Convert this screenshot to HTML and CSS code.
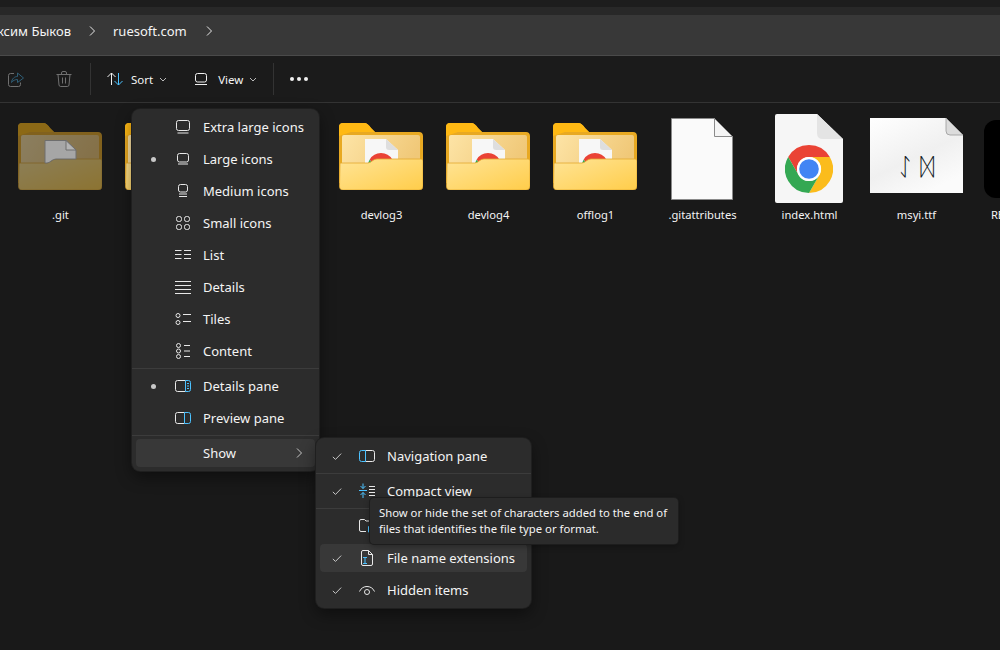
FILE: index.html
```html
<!DOCTYPE html>
<html>

<head>
    <title>ruesoft.com</title>
    <link rel="stylesheet" href="styles.css">
</head>

<body>

    <svg class="defs">
        <defs>
            <linearGradient id="paperGrad" x1="0" y1="0" x2="1" y2="0.3">
                <stop offset="0" stop-color="#fde4a6" />
                <stop offset="1" stop-color="#f0c878" />
            </linearGradient>
            <linearGradient id="frontGrad" x1="0" y1="0" x2="1" y2="1">
                <stop offset="0" stop-color="#ffe496" />
                <stop offset="1" stop-color="#ffcd4a" />
            </linearGradient>
            <linearGradient id="fontGrad" x1="0" y1="0" x2="0.6" y2="1">
                <stop offset="0" stop-color="#ffffff" />
                <stop offset="0.6" stop-color="#f0f0f0" />
                <stop offset="1" stop-color="#fbfbfb" />
            </linearGradient>

            <symbol id="folder-back" viewBox="0 0 84 67">
                <path d="M4 0H25C28 0 30 2 32 5L36 9H80C82.500 9 84 10.500 84 13V60H0V4C0 1.500 1.500 0 4 0Z" fill="#e8a922" />
                <path d="M4 0H25C28 0 30 2 32 5L36 9H12L0 13V4C0 1.500 1.500 0 4 0Z" fill="#ffb914" />
                <rect x="3" y="12" width="78" height="40" rx="2" fill="url(#paperGrad)" />
            </symbol>
            <symbol id="folder-front" viewBox="0 0 84 67">
                <path d="M1 41C1 40.500 1.500 40 2 40H29C32 40 34 36 38 36H82C83 36 84 37 84 38V63C84 65.500 82.500 67 80 67H4C1.500 67 0.500 65.500 0.500 63Z" fill="url(#frontGrad)" stroke="#e3a82e" stroke-width="0.8" />
            </symbol>

            <symbol id="chrome" viewBox="0 0 48 48">
                <path d="M24 0A24 24 0 0 0 3.200 12L13.600 30A12 12 0 0 1 24 12H44.800A24 24 0 0 0 24 0Z" fill="#ea4335" />
                <path d="M44.800 12A24 24 0 0 1 24 48L34.400 30A12 12 0 0 0 24 12Z" fill="#fbbc1c" />
                <path d="M3.200 12A24 24 0 0 0 24 48L34.400 30A12 12 0 0 1 13.600 30Z" fill="#34a853" />
                <circle cx="24" cy="24" r="12" fill="#fff" />
                <circle cx="24" cy="24" r="9.800" fill="#4285f4" />
            </symbol>

            <symbol id="ic-view" viewBox="0 0 16 16">
                <rect x="2.500" y="2.500" width="11" height="8.500" rx="2" />
                <path d="M2 13.500H14" />
            </symbol>
            <symbol id="ic-xl" viewBox="0 0 16 16">
                <rect x="1.500" y="1.500" width="13" height="10" rx="2" />
                <path d="M2.500 14H13.500" />
            </symbol>
            <symbol id="ic-lg" viewBox="0 0 16 16">
                <rect x="2.500" y="2.500" width="11" height="8.500" rx="2" />
                <path d="M3 13H13" />
            </symbol>
            <symbol id="ic-md" viewBox="0 0 16 16">
                <rect x="3.500" y="1.500" width="9" height="7.500" rx="2" />
                <path d="M4 11H12M4 13.500H12" />
            </symbol>
            <symbol id="ic-sm" viewBox="0 0 16 16">
                <rect x="1.500" y="1.500" width="5" height="5" rx="2" />
                <rect x="9.500" y="1.500" width="5" height="5" rx="2" />
                <rect x="1.500" y="9.500" width="5" height="5" rx="2" />
                <rect x="9.500" y="9.500" width="5" height="5" rx="2" />
            </symbol>
            <symbol id="ic-list" viewBox="0 0 16 16">
                <path d="M0 3.500H6.500M0 7.500H6.500M0 11.500H6.500M9 3.500H16M9 7.500H16M9 11.500H16" />
            </symbol>
            <symbol id="ic-details" viewBox="0 0 16 16">
                <path d="M0 2.500H16M0 6.500H16M0 10.500H16M0 14.500H16" />
            </symbol>
            <symbol id="ic-tiles" viewBox="0 0 16 16">
                <circle cx="3" cy="4.500" r="2" />
                <circle cx="3" cy="11.500" r="2" />
                <path d="M8 3.500H16M8 10.500H16" />
            </symbol>
            <symbol id="ic-content" viewBox="0 0 16 16">
                <circle cx="3.500" cy="2.500" r="2" />
                <circle cx="3.500" cy="8" r="2" />
                <circle cx="3.500" cy="13.500" r="2" />
                <path d="M9 2.500H15M9 8H15M9 13.500H15" />
            </symbol>
            <symbol id="ic-detailspane" viewBox="0 0 16 16">
                <path d="M10.500 2.500H2.500Q0.500 2.500 0.500 4.500V11.500Q0.500 13.500 2.500 13.500H10.500" />
                <path class="accent" d="M10.500 2.500H13.500Q15.500 2.500 15.500 4.500V11.500Q15.500 13.500 13.500 13.500H10.500ZM12 5.500H14M12 8H14M12 10.500H14" />
            </symbol>
            <symbol id="ic-previewpane" viewBox="0 0 16 16">
                <path d="M9.500 2.500H2.500Q0.500 2.500 0.500 4.500V11.500Q0.500 13.500 2.500 13.500H9.500" />
                <path class="accent" d="M9.500 2.500H13.500Q15.500 2.500 15.500 4.500V11.500Q15.500 13.500 13.500 13.500H9.500Z" />
            </symbol>
            <symbol id="ic-navpane" viewBox="0 0 16 16">
                <path d="M6.500 2.500H13.500Q15.500 2.500 15.500 4.500V11.500Q15.500 13.500 13.500 13.500H6.500" />
                <path class="accent" d="M6.500 2.500H2.500Q0.500 2.500 0.500 4.500V11.500Q0.500 13.500 2.500 13.500H6.500Z" />
            </symbol>
            <symbol id="ic-compact" viewBox="0 0 16 16">
                <path class="accent" d="M0 7.500H8M4 0.500V5.500M1.500 3L4 5.500L6.500 3M4 15V9.500M1.500 12L4 9.500L6.500 12" />
                <path d="M10 3.500H16M10 6.500H16M10 9.500H16M10 12.500H16" />
            </symbol>
            <symbol id="ic-checkbox" viewBox="0 0 16 16">
                <path d="M13 7V4.500Q13 3 11.500 3H7L5.500 1.500H2Q0.500 1.500 0.500 3V12Q0.500 13.500 2 13.500H7" />
                <rect class="accent-fill" x="9" y="8" width="6" height="6.500" rx="1" />
            </symbol>
            <symbol id="ic-fileext" viewBox="0 0 16 16">
                <path d="M9.500 0.500H4Q2.500 0.500 2.500 2V14Q2.500 15.500 4 15.500H12Q13.500 15.500 13.500 14V4.500L9.500 0.500V4.500H13.500" />
                <path class="accent" d="M4 7.500H8M6 7.500V13.500M4 13.500H8" />
            </symbol>
            <symbol id="ic-eye" viewBox="0 0 16 16">
                <path d="M0.500 9.500C2 6 5 4.500 8 4.500C11 4.500 14 6 15.500 9.500" />
                <circle cx="8" cy="10" r="2.500" />
            </symbol>
        </defs>
    </svg>

    <div class="window">
        <div class="tabstrip"></div>

        <div class="addressbar">
            <div class="crumb-clip"><span>Максим Быков</span></div>
            <svg class="crumb-chev" viewBox="0 0 8 12"><path d="M2 1.500L6.500 6L2 10.500" /></svg>
            <span class="crumb">ruesoft.com</span>
            <svg class="crumb-chev" viewBox="0 0 8 12"><path d="M2 1.500L6.500 6L2 10.500" /></svg>
        </div>

        <div class="toolbar">
            <svg class="tool-icon dim" viewBox="0 0 16 16">
                <path d="M6 2.500H2.500Q0.500 2.500 0.500 4.500V13.500Q0.500 15.500 2.500 15.500H10.500Q12.500 15.500 12.500 13.500V11.500" />
                <path class="accent" d="M3.500 11.500C4 7.500 6.500 5.500 9.500 5.500V2L15.500 7L9.500 11.500V8.500C7 8.500 5 9.500 3.500 11.500Z" />
            </svg>
            <svg class="tool-icon dim trash" viewBox="0 0 16 16">
                <path d="M0.500 3.500H15.500M5.500 3.500V2Q5.500 0.500 7 0.500H9Q10.500 0.500 10.500 2V3.500M2 3.500L3 14Q3.200 15.500 4.700 15.500H11.300Q12.800 15.500 13 14L14 3.500M6.500 6.500V12.500M9.500 6.500V12.500" />
            </svg>
            <div class="tool-sep"></div>
            <svg class="tool-icon sort-icon" viewBox="0 0 16 16">
                <path d="M4.500 14V2M0.500 6L4.500 2L8.500 6" />
                <path class="accent" d="M11.500 2V14M7.500 10L11.500 14L15.500 10" />
            </svg>
            <span class="tool-label">Sort</span>
            <svg class="tool-chev" viewBox="0 0 8 5"><path d="M1 1L4 4L7 1" /></svg>
            <svg class="tool-icon view-icon" viewBox="0 0 16 16"><use href="#ic-view" /></svg>
            <span class="tool-label">View</span>
            <svg class="tool-chev" viewBox="0 0 8 5"><path d="M1 1L4 4L7 1" /></svg>
            <div class="tool-sep second"></div>
            <div class="dots"><i></i><i></i><i></i></div>
        </div>

        <div class="files">
            <div class="file">
                <div class="thumb">
                    <svg class="folder" viewBox="0 0 84 67">
                        <g class="faded">
                            <use href="#folder-back" />
                            <use href="#folder-front" />
                        </g>
                        <path d="M27 17.500H48L58 27V36H38C34 36 32 40 29 40H27Z" fill="#a6a6a6" stroke="#6e6e6e" />
                        <path d="M48 17.500V27H58Z" fill="#b4b4b4" stroke="#6e6e6e" />
                    </svg>
                </div>
                <div class="name">.git</div>
            </div>
            <div class="file">
                <div class="thumb">
                    <svg class="folder" viewBox="0 0 84 67"><use href="#folder-back" /><use href="#folder-front" /></svg>
                </div>
                <div class="name">devlog1</div>
            </div>
            <div class="file">
                <div class="thumb">
                    <svg class="folder" viewBox="0 0 84 67"><use href="#folder-back" /><use href="#folder-front" /></svg>
                </div>
                <div class="name">devlog2</div>
            </div>
            <div class="file">
                <div class="thumb">
                    <svg class="folder" viewBox="0 0 84 67">
                        <use href="#folder-back" />
                        <path d="M26 16H47L59 27V50H26Z" fill="#f7f7f7" />
                        <path d="M47 16L59 27H50Q47 27 47 24Z" fill="#dedede" />
                        <use href="#chrome" x="29" y="30" width="26" height="26" />
                        <use href="#folder-front" />
                    </svg>
                </div>
                <div class="name">devlog3</div>
            </div>
            <div class="file">
                <div class="thumb">
                    <svg class="folder" viewBox="0 0 84 67">
                        <use href="#folder-back" />
                        <path d="M26 16H47L59 27V50H26Z" fill="#f7f7f7" />
                        <path d="M47 16L59 27H50Q47 27 47 24Z" fill="#dedede" />
                        <use href="#chrome" x="29" y="30" width="26" height="26" />
                        <use href="#folder-front" />
                    </svg>
                </div>
                <div class="name">devlog4</div>
            </div>
            <div class="file">
                <div class="thumb">
                    <svg class="folder" viewBox="0 0 84 67">
                        <use href="#folder-back" />
                        <path d="M26 16H47L59 27V50H26Z" fill="#f7f7f7" />
                        <path d="M47 16L59 27H50Q47 27 47 24Z" fill="#dedede" />
                        <use href="#chrome" x="29" y="30" width="26" height="26" />
                        <use href="#folder-front" />
                    </svg>
                </div>
                <div class="name">offlog1</div>
            </div>
            <div class="file">
                <div class="thumb">
                    <svg class="doc-plain" viewBox="0 0 62 82">
                        <path d="M0.500 0.500H43.500L61.500 18.500V81.500H0.500Z" fill="#fafafa" stroke="#8a8a8a" />
                        <path d="M43.500 0.500L61.500 18.500H43.500Z" fill="#f4f4f4" stroke="#8a8a8a" />
                    </svg>
                </div>
                <div class="name">.gitattributes</div>
            </div>
            <div class="file">
                <div class="thumb">
                    <svg class="doc-chrome" viewBox="0 0 68 89">
                        <path d="M2 0H42L68 25V87Q68 89 66 89H2Q0 89 0 87V2Q0 0 2 0Z" fill="#f6f6f6" />
                        <path d="M42 0L68 25H48Q42 25 42 19Z" fill="#e4e4e4" />
                        <use href="#chrome" x="10" y="31" width="48" height="48" />
                    </svg>
                </div>
                <div class="name">index.html</div>
            </div>
            <div class="file">
                <div class="thumb">
                    <svg class="doc-font" viewBox="0 0 93 75">
                        <path d="M0 0H76L93 17V75H0Z" fill="url(#fontGrad)" />
                        <path d="M76 0L93 17H80Q76 17 76 13Z" fill="#dcdcdc" stroke="#999" stroke-width="0.800" />
                        <text class="rune" x="46" y="57" text-anchor="middle">ᛇ ᛞ</text>
                    </svg>
                </div>
                <div class="name">msyi.ttf</div>
            </div>
            <div class="file">
                <div class="thumb">
                    <div class="black-tile"></div>
                </div>
                <div class="name">README.md</div>
            </div>
        </div>
    </div>

    <div class="menu view-menu">
        <div class="row"><span class="mark"></span><svg class="row-icon" viewBox="0 0 16 16"><use href="#ic-xl" /></svg><span>Extra large icons</span></div>
        <div class="row"><span class="mark"><i class="bullet"></i></span><svg class="row-icon" viewBox="0 0 16 16"><use href="#ic-lg" /></svg><span>Large icons</span></div>
        <div class="row"><span class="mark"></span><svg class="row-icon" viewBox="0 0 16 16"><use href="#ic-md" /></svg><span>Medium icons</span></div>
        <div class="row"><span class="mark"></span><svg class="row-icon" viewBox="0 0 16 16"><use href="#ic-sm" /></svg><span>Small icons</span></div>
        <div class="row"><span class="mark"></span><svg class="row-icon" viewBox="0 0 16 16"><use href="#ic-list" /></svg><span>List</span></div>
        <div class="row"><span class="mark"></span><svg class="row-icon" viewBox="0 0 16 16"><use href="#ic-details" /></svg><span>Details</span></div>
        <div class="row"><span class="mark"></span><svg class="row-icon" viewBox="0 0 16 16"><use href="#ic-tiles" /></svg><span>Tiles</span></div>
        <div class="row"><span class="mark"></span><svg class="row-icon" viewBox="0 0 16 16"><use href="#ic-content" /></svg><span>Content</span></div>
        <div class="menu-sep"></div>
        <div class="row"><span class="mark"><i class="bullet"></i></span><svg class="row-icon" viewBox="0 0 16 16"><use href="#ic-detailspane" /></svg><span>Details pane</span></div>
        <div class="row"><span class="mark"></span><svg class="row-icon" viewBox="0 0 16 16"><use href="#ic-previewpane" /></svg><span>Preview pane</span></div>
        <div class="menu-sep"></div>
        <div class="row active"><span class="mark"></span><span class="row-icon"></span><span>Show</span>
            <svg class="row-arrow" viewBox="0 0 8 12"><path d="M2 1.500L6.500 6L2 10.500" /></svg>
        </div>
    </div>

    <div class="menu show-menu">
        <div class="row"><span class="mark"><svg class="check" viewBox="0 0 12 10"><path d="M1 5.500L4.200 8.500L11 1.500" /></svg></span><svg class="row-icon" viewBox="0 0 16 16"><use href="#ic-navpane" /></svg><span>Navigation pane</span></div>
        <div class="menu-sep"></div>
        <div class="row"><span class="mark"><svg class="check" viewBox="0 0 12 10"><path d="M1 5.500L4.200 8.500L11 1.500" /></svg></span><svg class="row-icon" viewBox="0 0 16 16"><use href="#ic-compact" /></svg><span>Compact view</span></div>
        <div class="menu-sep"></div>
        <div class="row"><span class="mark"></span><svg class="row-icon" viewBox="0 0 16 16"><use href="#ic-checkbox" /></svg><span>Item check boxes</span></div>
        <div class="row active"><span class="mark"><svg class="check" viewBox="0 0 12 10"><path d="M1 5.500L4.200 8.500L11 1.500" /></svg></span><svg class="row-icon" viewBox="0 0 16 16"><use href="#ic-fileext" /></svg><span>File name extensions</span></div>
        <div class="row"><span class="mark"><svg class="check" viewBox="0 0 12 10"><path d="M1 5.500L4.200 8.500L11 1.500" /></svg></span><svg class="row-icon" viewBox="0 0 16 16"><use href="#ic-eye" /></svg><span>Hidden items</span></div>
    </div>

    <div class="tooltip">Show or hide the set of characters added to the end of<br>files that identifies the file type or format.</div>

</body>

</html>
```

FILE: styles.css
```css
* {
    box-sizing: border-box
}

html,
body {
    margin: 0;
    height: 100%;
    overflow: hidden;
    background-color: #191919;
    color: #f4f4f4;
    font-family: "Noto Sans", sans-serif;
}

.defs {
    display: block;
    width: 0;
    height: 0;
}

svg {
    fill: none;
    stroke: none;
    flex-shrink: 0;
}

.accent {
    stroke: #4cc2ff;
}

.accent-fill {
    fill: #4cc2ff;
    stroke: none;
}

.window {
    display: flex;
    flex-direction: column;
    height: 650px;
}

.tabstrip {
    height: 15px;
    background: linear-gradient(#1d1d1d 7px, #282828 7px);
}

/* address bar */

.addressbar {
    display: flex;
    align-items: center;
    height: 41px;
    padding-bottom: 8px;
    background-color: #383838;
    border-bottom: 1px solid #4a4a4a;
    font-size: 13px;
}

.crumb-clip {
    display: flex;
    justify-content: flex-end;
    width: 71px;
    overflow: hidden;
    white-space: nowrap;
}

.crumb-clip span {
    flex-shrink: 0;
}

.crumb-chev {
    width: 8px;
    height: 12px;
    margin: 0 17px;
    stroke: #e8e8e8;
    stroke-width: 1;
}

.crumb {
    white-space: nowrap;
}

.crumb-chev:last-child {
    margin-left: 18px;
}

/* toolbar */

.toolbar {
    display: flex;
    align-items: center;
    height: 47px;
    padding-left: 8px;
    background-color: #1b1b1b;
    border-bottom: 1px solid #333;
    font-size: 11.5px;
}

.tool-icon {
    width: 16px;
    height: 16px;
    stroke: #f0f0f0;
    stroke-width: 1;
}

.tool-icon.dim {
    opacity: 0.4;
}

.trash {
    margin-left: 32px;
}

.tool-sep {
    width: 1px;
    height: 32px;
    margin-left: 18px;
    background-color: #333;
}

.tool-sep.second {
    margin-left: 16px;
}

.sort-icon {
    margin-left: 16px;
}

.view-icon {
    margin-left: 26px;
}

.tool-label {
    margin-left: 8px;
}

.view-icon + .tool-label {
    margin-left: 9px;
}

.tool-chev {
    width: 8px;
    height: 5px;
    margin-left: 6px;
    stroke: #bbb;
}

.dots {
    display: flex;
    gap: 3px;
    margin-left: 16px;
}

.dots i {
    width: 4px;
    height: 4px;
    border-radius: 50%;
    background-color: #f0f0f0;
}

/* files */

.files {
    display: flex;
    padding: 11px 0 0 6px;
}

.file {
    flex: 0 0 107px;
    display: flex;
    flex-direction: column;
    align-items: center;
}

.thumb {
    display: flex;
    justify-content: center;
    width: 107px;
    height: 93px;
}

.name {
    margin-left: 2px;
    font-size: 11.2px;
    line-height: 16px;
    white-space: nowrap;
}

.folder {
    width: 84px;
    height: 67px;
    margin-top: 9px;
}

.faded {
    opacity: 0.5;
}

.doc-plain {
    width: 62px;
    height: 82px;
    margin-top: 4px;
}

.doc-chrome {
    width: 68px;
    height: 89px;
    margin-top: 0;
}

.doc-font {
    width: 93px;
    height: 75px;
    margin: 4px 0 0 2px;
}

.rune {
    font-family: "DejaVu Sans", sans-serif;
    font-size: 24px;
    fill: #111a24;
}

.black-tile {
    width: 78px;
    height: 78px;
    margin-top: 6px;
    border-radius: 12px;
    background-color: #000;
}

/* menus */

.menu {
    position: absolute;
    display: flex;
    flex-direction: column;
    padding: 2px 0;
    background-color: #2c2c2c;
    border-radius: 8px;
    box-shadow: 0 0 0 1px #1f1f1f, 0 6px 16px rgba(0, 0, 0, 0.45);
    font-size: 13px;
}

.view-menu {
    left: 132px;
    top: 109px;
    width: 187px;
}

.show-menu {
    left: 316px;
    top: 438px;
    width: 215px;
}

.row {
    display: flex;
    align-items: center;
    height: 28px;
    margin: 2px 4px;
    border-radius: 4px;
    white-space: nowrap;
}

.row.active {
    background-color: #383838;
}

.mark {
    display: flex;
    justify-content: center;
    align-items: center;
    width: 34px;
}

.bullet {
    width: 5px;
    height: 5px;
    border-radius: 50%;
    background-color: #c8c8c8;
}

.check {
    width: 10px;
    height: 9px;
    stroke: #c8c8c8;
    stroke-width: 1.200;
}

.row-icon {
    width: 16px;
    height: 16px;
    margin: 0 12px 0 5px;
    stroke: #e8e8e8;
    stroke-width: 1;
}

.row-arrow {
    width: 8px;
    height: 12px;
    margin-left: auto;
    margin-right: 12px;
    stroke: #c8c8c8;
    stroke-width: 1;
}

.menu-sep {
    height: 1px;
    margin: 1px 0;
    background-color: #3c3c3c;
}

.tooltip {
    position: absolute;
    left: 370px;
    top: 498px;
    width: 308px;
    height: 46px;
    padding: 7px 9px;
    background-color: #2b2b2b;
    border-radius: 4px;
    box-shadow: 0 0 0 1px #1d1d1d, 0 2px 6px rgba(0, 0, 0, 0.35);
    font-size: 11.3px;
    line-height: 16px;
    white-space: nowrap;
}
```
